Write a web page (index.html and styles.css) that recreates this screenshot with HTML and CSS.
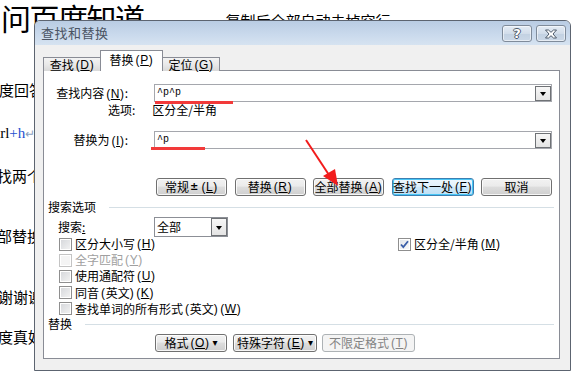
FILE: index.html
```html
<!DOCTYPE html>
<html lang="zh">
<head>
<meta charset="utf-8">
<title>查找和替换</title>
<link rel="stylesheet" href="styles.css">
</head>
<body>
<div class="doc">
  <div class="l0"><span class="big">问百度知道</span><span class="sm">，复制后全部自动去掉空行</span></div>
  <div class="ln l1">度回答的方法</div>
  <div class="ln l2 serif">Ctrl<span class="blue">+h</span><span class="ret">↵</span></div>
  <div class="ln l3">找两个</div>
  <div class="ln l4">部替换</div>
  <div class="ln l5">谢谢谢</div>
  <div class="ln l6">度真好</div>
</div>

<div class="dlg">
  <div class="titlebar">
    <span class="title">查找和替换</span>
    <div class="tbtns">
      <span class="tbtn help">?</span>
      <span class="tbtn close"><svg width="14" height="10" viewBox="0 0 14 10"><path d="M1.5 1h3l2.5 2.3L9.5 1h3L9 5l3.5 4h-3L7 6.7 4.5 9h-3L5 5z" fill="#fff" stroke="#4d5a6a" stroke-width="1" stroke-linejoin="round"/></svg></span>
    </div>
  </div>
  <div class="body">
    <div class="tabs">
      <div class="tab t1">查找<span class="mn">(<u>D</u>)</span></div>
      <div class="tab sel">替换<span class="mn">(<u>P</u>)</span></div>
      <div class="tab t3">定位<span class="mn">(<u>G</u>)</span></div>
    </div>
    <div class="panel">
      <div class="frow">
        <span class="lbl">查找内容<span class="mn">(<u>N</u>)</span>:</span>
        <div class="combo wide"><span class="val mono">^p^p</span><span class="drop"><i></i></span></div>
      </div>
      <div class="optrow"><span>选项:</span><span class="optval">区分全/半角</span></div>
      <div class="frow rrow">
        <span class="lbl">替换为<span class="mn">(<u>I</u>)</span>:</span>
        <div class="combo wide"><span class="val mono">^p</span><span class="drop"><i></i></span></div>
      </div>
      <div class="btnrow">
        <span class="btn">常规 <span class="upsym">±</span><span class="mn">(<u>L</u>)</span></span>
        <span class="btn">替换<span class="mn">(<u>R</u>)</span></span>
        <span class="btn">全部替换<span class="mn">(<u>A</u>)</span></span>
        <span class="btn focus">查找下一处<span class="mn">(<u>F</u>)</span></span>
        <span class="btn">取消</span>
      </div>
      <div class="sect s1"><span>搜索选项</span><i></i></div>
      <div class="searchrow">
        <span class="slbl">搜索<u>:</u></span>
        <div class="combo small"><span class="val">全部</span><span class="drop"><i></i></span></div>
      </div>
      <div class="checks">
        <label class="chk"><span class="box"></span>区分大小写<span class="mn">(<u>H</u>)</span></label>
        <label class="chk right"><span class="box on"><svg width="9" height="9" viewBox="0 0 9 9"><path d="M1 4.5l2.3 2.6L8 1.2" fill="none" stroke="#3a5ea8" stroke-width="1.8"/></svg></span>区分全/半角<span class="mn">(<u>M</u>)</span></label>
        <label class="chk dis"><span class="box"></span>全字匹配<span class="mn">(<u>Y</u>)</span></label>
        <span></span>
        <label class="chk"><span class="box"></span>使用通配符<span class="mn">(<u>U</u>)</span></label>
        <span></span>
        <label class="chk"><span class="box"></span>同音<span class="mn">(</span>英文<span class="mn p0">)</span><span class="mn">(<u>K</u>)</span></label>
        <span></span>
        <label class="chk"><span class="box"></span>查找单词的所有形式<span class="mn">(</span>英文<span class="mn p0">)</span><span class="mn">(<u>W</u>)</span></label>
        <span></span>
      </div>
      <div class="sect s2"><span>替换</span><i></i></div>
      <div class="btnrow2">
        <span class="btn b1">格式<span class="mn">(<u>O</u>)</span><span class="dd">▾</span></span>
        <span class="btn b2">特殊字符<span class="mn">(<u>E</u>)</span><span class="dd">▾</span></span>
        <span class="btn b3 disabled">不限定格式<span class="mn">(<u>T</u>)</span></span>
      </div>
    </div>
  </div>
</div>

<div class="mark m1"></div>
<div class="mark m2"></div>
<svg class="arrow" width="60" height="70" viewBox="0 0 60 70">
  <line x1="4" y1="2" x2="29" y2="40" stroke="#f21c1c" stroke-width="2"/>
  <polygon points="21,38 36,48 33,31" fill="#f21c1c"/>
</svg>
</body>
</html>
```

FILE: styles.css
```css
* { box-sizing: border-box; }
html, body { margin: 0; padding: 0; }
body {
  width: 578px;
  height: 376px;
  overflow: hidden;
  background: #fff;
  position: relative;
  font-family: "Noto Sans CJK SC", sans-serif;
  color: #000;
}

/* background document */
.doc { white-space: nowrap; }
.l0 { height: 34px; display: flex; align-items: flex-start; margin-left: 1px; }
.big { font-size: 30px; line-height: 34px; letter-spacing: -1.5px; }
.sm { font-size: 15px; line-height: 15px; margin-left: 67px; margin-top: 13px; color: #000; }
.ln { font-size: 15px; line-height: 20px; height: 20px; }
.l1 { margin-top: 46px; margin-left: -1px; }
.l2 { margin-top: 23px; margin-left: -14px; font-family: "Liberation Serif", serif; font-size: 15px; }
.blue { color: #1d4fd0; }
.ret { color: #8aa0c0; font-size: 12px; }
.l3 { margin-top: 23px; margin-left: -3px; }
.l4 { margin-top: 40px; margin-left: -3px; }
.l5 { margin-top: 41px; margin-left: -2px; }
.l6 { margin-top: 20px; margin-left: -2px; }

/* dialog window */
.dlg {
  position: absolute;
  left: 34px;
  top: 20px;
  width: 537px;
  height: 351px;
  border: 1px solid #5c6470;
  border-radius: 6px 6px 0 0;
  background: #f0f0f0;
  display: flex;
  flex-direction: column;
  font-size: 12px;
  line-height: 14px;
  overflow: hidden;
}
.dlg u { text-decoration: underline; text-underline-offset: 1px; }
.mn {
  font-family: "Liberation Sans", sans-serif;
  font-size: 12px;
  letter-spacing: 0.6px;
  margin-left: 2px;
}
.mn.p0 { margin-left: 0; }
.titlebar {
  height: 24px;
  flex: none;
  display: flex;
  align-items: center;
  justify-content: space-between;
  padding: 0 4px 0 6px;
  background: linear-gradient(#b9cce3, #c9d9ec 55%, #d6e3f1);
}
.title { font-size: 13px; color: #4a5463; letter-spacing: 0.5px; }
.tbtns { display: flex; gap: 4px; margin-top: 1px; }
.tbtn {
  width: 30px;
  height: 17px;
  border: 1px solid #7f8b9a;
  border-radius: 3px;
  background: linear-gradient(#e4ecf5, #d2ddea 50%, #c2d1e2 51%, #cbd8e7);
  box-shadow: inset 0 0 0 1px rgba(255,255,255,0.55);
  display: flex;
  align-items: center;
  justify-content: center;
}
.help {
  font-family: "DejaVu Sans", sans-serif;
  font-weight: bold;
  font-size: 13px;
  line-height: 13px;
  color: #fff;
  text-shadow: -1px 0 #4d5a6a, 1px 0 #4d5a6a, 0 -1px #4d5a6a, 0 1px #4d5a6a;
}

.body {
  flex: 1;
  padding: 6px 10px 11px 8px;
  display: flex;
  flex-direction: column;
}
.tabs {
  display: flex;
  align-items: flex-end;
  height: 20px;
  position: relative;
  z-index: 1;
  margin-bottom: -1px;
}
.tab {
  height: 14px;
  border: 1px solid #898c95;
  border-bottom: none;
  background: linear-gradient(#f3f3f3, #e9e9e9 50%, #d9d9d9);
  display: flex;
  align-items: center;
  justify-content: center;
  font-size: 12px;
}
.t1 { width: 58px; }
.sel {
  width: 63px;
  height: 21px;
  background: #fff;
  margin-left: -1px;
  padding-bottom: 2px;
}
.t3 { width: 58px; margin-left: -1px; }

.panel {
  flex: 1;
  background: #fff;
  border: 1px solid #898c95;
  padding: 0 6px 0 0;
  display: flex;
  flex-direction: column;
}

.frow {
  display: grid;
  grid-template-columns: 84px 398px;
  column-gap: 26px;
  align-items: center;
  height: 18px;
  margin-top: 13px;
}
.rrow { margin-top: 14px; }
.lbl { text-align: right; white-space: nowrap; }

.combo {
  height: 18px;
  border: 1px solid #a5a7ad;
  display: flex;
  align-items: center;
  background: #fff;
}
.combo.small { width: 74px; height: 20px; border-color: #8c8f96; }
.val { padding-left: 2px; }
.mono { font-family: "Liberation Mono", monospace; font-size: 10px; line-height: 12px; }
.drop {
  margin-left: auto;
  width: 16px;
  height: 15px;
  border: 1px solid #6f7276;
  background: linear-gradient(#f7f7f7, #e4e4e4);
  display: flex;
  align-items: center;
  justify-content: center;
}
.combo.small .drop { height: 18px; width: 16px; }
.drop i {
  width: 0; height: 0;
  border-left: 3.5px solid transparent;
  border-right: 3.5px solid transparent;
  border-top: 4px solid #000;
  margin-top: 1px;
}

.optrow {
  display: flex;
  height: 14px;
  margin-top: 1px;
  padding-left: 64px;
}
.optval { margin-left: 17px; }

.btnrow {
  display: flex;
  gap: 7.5px;
  margin-top: 29px;
  padding-left: 112px;
}
.btn {
  height: 18px;
  width: 71px;
  border: 1px solid #707070;
  border-radius: 3px;
  background: linear-gradient(#f2f2f2, #ebebeb 45%, #dddddd 50%, #cfcfcf);
  box-shadow: inset 0 0 0 1px rgba(255,255,255,0.8);
  display: flex;
  align-items: center;
  justify-content: center;
  white-space: nowrap;
  font-size: 12px;
  line-height: 14px;
}
.btn.focus {
  width: 82px;
  border-color: #3c7fb1;
  background: linear-gradient(#eef7fd, #e2f1fb 45%, #cfe8f8 50%, #bfe0f5);
  box-shadow: inset 0 0 0 1px #48c6f6;
}
.upsym { font-size: 10px; margin: 0 1px 0 1px; font-family: "DejaVu Sans", sans-serif; font-weight: bold; }

.sect {
  display: flex;
  align-items: center;
  height: 14px;
  padding-left: 4px;
  padding-right: 0;
}
.sect i { flex: 1; height: 1px; background: #d5dfe5; margin-left: 13px; margin-top: 1px; margin-right: -1px; }
.s1 { margin-top: 4px; }
.s2 { margin-top: 0; }

.searchrow {
  display: flex;
  align-items: center;
  height: 20px;
  margin-top: 3px;
  padding-left: 14px;
}
.slbl { width: 96px; }

.checks {
  display: grid;
  grid-template-columns: 339px auto;
  grid-auto-rows: 16.2px;
  margin-top: -1px;
  padding-left: 15px;
}
.chk {
  display: flex;
  align-items: center;
  white-space: nowrap;
}
.box {
  width: 13px;
  height: 13px;
  margin-right: 3px;
  border: 1px solid #8f8f8f;
  background: linear-gradient(135deg, #d4d6da, #f4f4f4);
  box-shadow: inset 0 0 0 1px #fff;
  display: flex;
  align-items: center;
  justify-content: center;
  flex: none;
}
.box.on { background: linear-gradient(135deg, #e0e4ea, #fafafa); }
.chk.dis { color: #a0a0a0; }
.chk.dis .box { border-color: #c4c4c4; background: #f4f4f4; }

.btnrow2 {
  display: flex;
  margin-top: 3px;
  padding-left: 111px;
}
.b1 { width: 72px; }
.b2 { width: 84px; margin-left: 6px; }
.b3 { width: 93px; margin-left: 5px; }
.dd { font-size: 10px; margin-left: 3px; font-family: "DejaVu Sans", sans-serif; }
.btn.disabled {
  border-color: #adb2b5;
  background: #f4f4f4;
  color: #838383;
  box-shadow: none;
}

/* annotations drawn over the screenshot */
.mark { position: absolute; height: 3px; background: #f23a3a; }
.m1 { left: 155px; top: 101px; width: 78px; }
.m2 { left: 151px; top: 147px; width: 54px; }
.arrow { position: absolute; left: 302px; top: 138px; }
```
